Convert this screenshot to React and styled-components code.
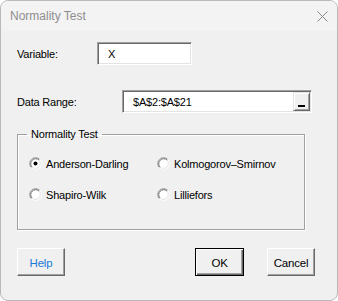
import React, { useState } from "react";
import styled, { createGlobalStyle } from "styled-components";

const Global = createGlobalStyle`
  html, body { margin: 0; padding: 0; background: #ffffff; }
  * { box-sizing: border-box; }
`;

const FONT = `"Liberation Sans", Arial, sans-serif`;

const Window = styled.div`
  width: 338px;
  height: 301px;
  border: 1px solid #b9b9b9;
  border-radius: 8px;
  overflow: hidden;
  background: #f0f0f0;
  font-family: ${FONT};
  font-size: 11px;
  letter-spacing: -0.2px;
  color: #000;
  display: flex;
  flex-direction: column;
`;

const TitleBar = styled.div`
  height: 30px;
  flex: none;
  background: #f3f3f3;
  display: flex;
  align-items: center;
  justify-content: space-between;
  padding: 0 9px 0 9px;
`;

const Title = styled.span`
  color: #8e8e8e;
  font-size: 12px;
  letter-spacing: 0;
`;

const CloseIcon = () => (
  <svg width="11" height="11" viewBox="0 0 11 11">
    <path d="M0.5 0.5 L10.5 10.5 M10.5 0.5 L0.5 10.5" stroke="#8a8a8a" strokeWidth="1" />
  </svg>
);

const Body = styled.div`
  padding: 11px 0 0 16px;
  display: flex;
  flex-direction: column;
`;

const FieldRow = styled.div`
  display: flex;
  align-items: center;
  height: 23px;
  margin-top: ${(p) => p.$top || 0}px;
`;

const Label = styled.span`
  width: ${(p) => p.$w}px;
  flex: none;
`;

const Input = styled.div`
  width: ${(p) => p.$w}px;
  height: 23px;
  background: #fff;
  border-style: solid;
  border-width: 1px;
  border-color: #a0a0a0 #ffffff #ffffff #a0a0a0;
  box-shadow: inset 1px 1px 0 #696969, inset -1px -1px 0 #e3e3e3;
  display: flex;
  align-items: center;
  justify-content: space-between;
  padding: 0 1px 0 10px;
`;

const RefButton = styled.div`
  width: 17px;
  height: 19px;
  background: #f0f0f0;
  border-style: solid;
  border-width: 1px;
  border-color: #e3e3e3 #696969 #696969 #e3e3e3;
  box-shadow: inset 1px 1px 0 #fff, inset -1px -1px 0 #a0a0a0;
  display: flex;
  align-items: flex-end;
  justify-content: center;
  padding-bottom: 3px;
`;

const Underscore = styled.span`
  width: 7px;
  height: 2px;
  background: #000;
`;

const Group = styled.fieldset`
  margin: 14px 0 0 0;
  width: 288px;
  height: 103px;
  border: 1px solid #a0a0a0;
  box-shadow: inset 1px 1px 0 #fff, 1px 1px 0 #fff;
  display: grid;
  grid-template-columns: 128px 1fr;
  grid-auto-rows: 31px;
  align-content: start;
  padding: 16px 0 0 11px;
`;

const Legend = styled.legend`
  margin-left: -2px;
  padding: 0 4px;
  line-height: 14px;
  color: #000;
`;

const RadioItem = styled.label`
  display: flex;
  align-items: center;
  gap: 4px;
  height: 13px;
  cursor: default;
`;

const Radio = ({ checked }) => (
  <svg width="13" height="13" viewBox="0 0 13 13">
    <circle cx="6.5" cy="6.5" r="5" fill="#fff" />
    <path d="M2.26 10.74 A6 6 0 0 1 10.74 2.26" fill="none" stroke="#a0a0a0" strokeWidth="1" />
    <path d="M10.74 2.26 A6 6 0 0 1 2.26 10.74" fill="none" stroke="#ffffff" strokeWidth="1" />
    <path d="M2.97 10.03 A5 5 0 0 1 10.03 2.97" fill="none" stroke="#696969" strokeWidth="1" />
    <path d="M10.03 2.97 A5 5 0 0 1 2.97 10.03" fill="none" stroke="#e3e3e3" strokeWidth="1" />
    {checked && <circle cx="6.5" cy="6.5" r="2" fill="#000" />}
  </svg>
);

const ButtonRow = styled.div`
  display: flex;
  align-items: center;
  margin-top: 18px;
  width: 298px;
`;

const Button = styled.div`
  width: ${(p) => (p.$default ? 49 : 48)}px;
  height: 28px;
  margin-left: ${(p) => p.$ml || 0}px;
  background: #f0f0f0;
  border-style: solid;
  border-width: 1px;
  border-color: ${(p) =>
    p.$default ? "#000 #000 #000 #000" : "#fff #696969 #696969 #fff"};
  box-shadow: ${(p) =>
    p.$default
      ? "inset 1px 1px 0 #fff, inset -1px -1px 0 #696969, inset -2px -2px 0 #a0a0a0"
      : "inset -1px -1px 0 #a0a0a0"};
  display: flex;
  align-items: center;
  justify-content: center;
  color: ${(p) => (p.$link ? "#1c7ad8" : "#000")};
  font-size: 11.5px;
  padding-top: 1px;
`;

const Spacer = styled.div`
  flex: 1;
`;

export default function App() {
  const [choice, setChoice] = useState("ad");
  const options = [
    ["ad", "Anderson-Darling"],
    ["ks", "Kolmogorov\u2013Smirnov"],
    ["sw", "Shapiro-Wilk"],
    ["li", "Lilliefors"],
  ];
  return (
    <>
      <Global />
      <Window>
        <TitleBar>
          <Title>Normality Test</Title>
          <CloseIcon />
        </TitleBar>
        <Body>
          <FieldRow>
            <Label $w={80}>Variable:</Label>
            <Input $w={95}>X</Input>
          </FieldRow>
          <FieldRow $top={25}>
            <Label $w={105}>Data Range:</Label>
            <Input $w={190}>
              $A$2:$A$21
              <RefButton>
                <Underscore />
              </RefButton>
            </Input>
          </FieldRow>
          <Group>
            <Legend>Normality Test</Legend>
            {options.map(([k, t]) => (
              <RadioItem key={k} onClick={() => setChoice(k)}>
                <Radio checked={choice === k} />
                {t}
              </RadioItem>
            ))}
          </Group>
          <ButtonRow>
            <Button $link>Help</Button>
            <Spacer />
            <Button $default>OK</Button>
            <Button $ml={23}>Cancel</Button>
          </ButtonRow>
        </Body>
      </Window>
    </>
  );
}
